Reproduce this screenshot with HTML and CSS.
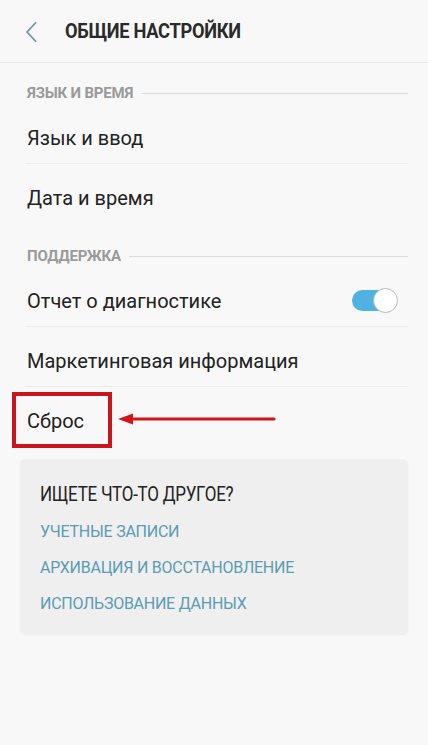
FILE: index.html
```html
<!DOCTYPE html>
<html lang="ru">
<head>
<meta charset="utf-8">
<title>Общие настройки</title>
<link rel="stylesheet" href="styles.css">
</head>
<body>
<div class="screen">
  <header class="appbar">
    <svg class="back" width="14" height="22" viewBox="0 0 14 22" aria-hidden="true">
      <path d="M11.5 2 L3 11 L11.5 20" fill="none" stroke="#6f9499" stroke-width="1.8" stroke-linecap="round" stroke-linejoin="round"/>
    </svg>
    <h1 class="title">ОБЩИЕ НАСТРОЙКИ</h1>
  </header>

  <div class="section section-first"><span class="section-label">ЯЗЫК И ВРЕМЯ</span><span class="section-line"></span></div>
  <div class="row row-divided">Язык и ввод</div>
  <div class="row">Дата и время</div>

  <div class="section section-second"><span class="section-label">ПОДДЕРЖКА</span><span class="section-line"></span></div>
  <div class="row row-divided row-toggle">
    <span>Отчет о диагностике</span>
    <span class="toggle"><span class="toggle-track"></span><span class="toggle-thumb"></span></span>
  </div>
  <div class="row row-divided">Маркетинговая информация</div>
  <div class="row row-reset">
    <span>Сброс</span>
    <span class="highlight-box"></span>
    <svg class="arrow" width="160" height="14" viewBox="0 0 160 14" aria-hidden="true">
      <path d="M14 7 H157" stroke="#d3121c" stroke-width="3.2" stroke-linecap="round"/>
      <path d="M1 7 L16 1.5 L16 12.5 Z" fill="#d3121c"/>
    </svg>
  </div>

  <div class="card">
    <div class="card-title">ИЩЕТЕ ЧТО-ТО ДРУГОЕ?</div>
    <div class="card-link">УЧЕТНЫЕ ЗАПИСИ</div>
    <div class="card-link">АРХИВАЦИЯ И ВОССТАНОВЛЕНИЕ</div>
    <div class="card-link">ИСПОЛЬЗОВАНИЕ ДАННЫХ</div>
  </div>
</div>
</body>
</html>
```

FILE: styles.css
```css
html, body {
  margin: 0;
  padding: 0;
  background: #f8f8f8;
}

body {
  font-family: Roboto, "Noto Sans", "Liberation Sans", sans-serif;
  color: #222222;
  width: 428px;
  height: 745px;
  overflow: hidden;
}

.screen {
  display: flex;
  flex-direction: column;
}

.appbar {
  height: 62px;
  border-bottom: 1px solid #e9e9e9;
  display: flex;
  align-items: center;
  padding-left: 24px;
  box-sizing: content-box;
}

.back {
  display: block;
  margin-top: 1px;
}

.title {
  margin: 0 0 0 27px;
  font-size: 21px;
  font-weight: 700;
  letter-spacing: -0.35px;
  color: #2a2a2a;
  line-height: 24px;
  white-space: nowrap;
  transform: scaleX(0.87);
  transform-origin: left center;
}

.section {
  display: flex;
  align-items: center;
  padding: 0 20px 0 27px;
}

.section-first {
  padding-top: 22px;
  padding-bottom: 3px;
}

.section-second {
  padding-top: 25px;
  padding-bottom: 2px;
}

.section-label {
  font-size: 15px;
  line-height: 16px;
  font-weight: 700;
  color: #9a9a9a;
  letter-spacing: -0.2px;
  white-space: nowrap;
}

.section-line {
  flex: 1;
  height: 1px;
  background: #dcdcdc;
  margin-left: 8px;
}

.row {
  margin: 0 20px 0 25px;
  padding: 22px 0 13px 2px;
  font-size: 20px;
  line-height: 24px;
  color: #222222;
  position: relative;
}

.row-divided {
  border-bottom: 1px solid #ececec;
}

.row-toggle {
  display: flex;
  justify-content: space-between;
  align-items: center;
}

.toggle {
  position: relative;
  width: 46px;
  height: 25px;
  margin-right: 10px;
}

.toggle-track {
  position: absolute;
  left: 0;
  top: 2px;
  width: 40px;
  height: 21px;
  border-radius: 11px;
  background: #4fb2e0;
}

.toggle-thumb {
  position: absolute;
  right: 0;
  top: 0;
  width: 23px;
  height: 23px;
  border-radius: 50%;
  background: #ffffff;
  border: 1px solid #b9b9b9;
}

.row-reset {
  display: flex;
}

.highlight-box {
  position: absolute;
  left: -13px;
  top: 5px;
  width: 92px;
  height: 48px;
  border: 4px solid #c9161e;
}

.arrow {
  position: absolute;
  left: 92px;
  top: 25px;
}

.card {
  margin: 13px 20px 0 20px;
  background: #efefef;
  border-radius: 6px;
  box-shadow: 0 1px 2px rgba(0, 0, 0, 0.06);
  padding: 23px 20px 10px 20px;
}

.card-title {
  font-size: 20px;
  line-height: 24px;
  color: #222222;
  letter-spacing: -0.3px;
  margin-bottom: 10px;
  white-space: nowrap;
  transform: scaleX(0.85);
  transform-origin: left center;
}

.card-link {
  font-size: 16px;
  line-height: 20px;
  color: #5a9cb4;
  letter-spacing: -0.25px;
  padding: 6px 0 10px 0;
}
```
